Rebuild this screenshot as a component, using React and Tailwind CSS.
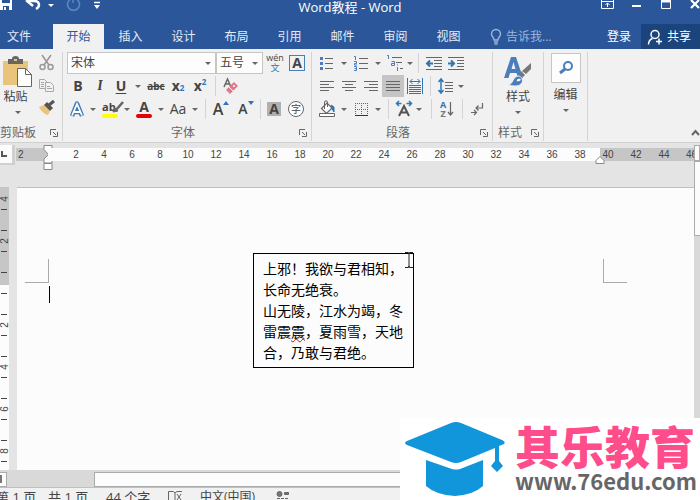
import clsx from "clsx"

const TABS = ["开始", "插入", "设计", "布局", "引用", "邮件", "审阅", "视图"]
const RULER = [2, 4, 6, 8, 10, 12, 14, 16, 18, 20, 22, 24, 26, 28, 30, 32, 34, 36, 38]

function Icon({ children, className = "size-4", box = "0 0 16 16" }) {
  return (
    <svg viewBox={box} className={clsx("shrink-0 overflow-visible", className)} fill="none" stroke="#666" strokeWidth="1">
      {children}
    </svg>
  )
}

function Caret({ className = "w-3" }) {
  return (
    <span className={clsx("flex shrink-0 justify-center", className)}>
      <svg viewBox="0 0 6 3" className="h-[3px] w-1.5">
        <path d="M0 0h6L3 3z" fill="#666" />
      </svg>
    </span>
  )
}

function Tool({ label, className = "w-[22px]", active, children }) {
  return (
    <button
      aria-label={label}
      className={clsx("flex h-[22px] shrink-0 items-center justify-center text-[#444]", className, active && "bg-[#c5c5c5]")}
    >
      {children}
    </button>
  )
}

function Sep() {
  return <span className="ml-1 h-5 w-px shrink-0 bg-[#d4d4d4]" />
}

function Lines({ rows }) {
  return (
    <Icon>
      {rows.map(([x, w], i) => (
        <path key={i} d={`M${x} ${3.5 + i * 3}h${w}`} />
      ))}
    </Icon>
  )
}

function GroupLabel({ children, launcher = true, className }) {
  return (
    <div className={clsx("flex h-[21px] items-center pt-1 text-xs text-[#666]", className)}>
      <span className="flex-1 whitespace-nowrap">{children}</span>
      {launcher && (
        <button aria-label={`${children}设置`}>
          <Icon className="size-2" box="0 0 8 8">
            <path d="M.5 6V.5H6M3 3l3 3M7.5 3v4.5H3" />
          </Icon>
        </button>
      )}
    </div>
  )
}

function Picker({ label, value, className }) {
  return (
    <label className={clsx("relative flex h-[22px] items-center border border-[#c6c6c6] bg-[#fdfdfd]", className)}>
      <select aria-label={label} defaultValue={value} className="h-full w-full appearance-none pl-[3px] text-xs text-[#444]">
        <option>{value}</option>
      </select>
      <span className="pointer-events-none absolute right-1">
        <Caret className="w-1.5" />
      </span>
    </label>
  )
}

function TitleBar() {
  return (
    <div className="flex h-6 items-center pb-2.5">
      <div className="flex flex-1 items-center pb-1">
        <button aria-label="保存">
          <Icon className="h-4 w-3" box="0 0 12 16">
            <path d="M0 0h12v13H0z" fill="#fff" stroke="none" />
            <path d="M2 1h8v5H2zM3 9h6v4H3z" fill="#2b579a" stroke="none" />
            <path d="M4 10h2v3H4z" fill="#fff" stroke="none" />
          </Icon>
        </button>
        <button aria-label="撤消" className="ml-[14px] flex items-center">
          <Icon>
            <path d="M2 4h7c4 0 6 5 1 8" stroke="#fff" strokeWidth="2.4" />
            <path d="M7-1L1 4l6 5" stroke="#fff" strokeWidth="2.4" />
          </Icon>
          <svg viewBox="0 0 6 3" className="ml-1.5 h-[3px] w-1.5">
            <path d="M0 0h6L3 3z" fill="#fff" />
          </svg>
        </button>
        <button aria-label="重复" className="ml-3">
          <Icon>
            <path d="M4 2.5a6 6 0 1 0 7 0M7 6V1h5" stroke="#5b83bd" strokeWidth="1.6" />
          </Icon>
        </button>
        <button aria-label="自定义" className="ml-[11px]">
          <Icon>
            <path d="M1 5.500h6" stroke="#fff" strokeWidth="1.500" />
            <path d="M1 8h6l-3 4z" fill="#fff" stroke="none" />
          </Icon>
        </button>
      </div>
      <h1 className="font-['Open_Sans','Noto_Sans_CJK_SC',sans-serif] text-[13px] leading-4 text-white">Word教程 - Word</h1>
      <div className="flex flex-1 items-center justify-end pb-0.5">
        <button aria-label="功能区显示选项" className="mr-[15px]">
          <Icon>
            <path d="M2.5 1.5h12v9h-12zM2 3.500h13M8.500 9V5M6.500 7l2-2 2 2" stroke="#fff" />
          </Icon>
        </button>
        <button aria-label="最小化" className="mr-3">
          <Icon>
            <path d="M2 8h9" stroke="#fff" strokeWidth="2" />
          </Icon>
        </button>
        <button aria-label="最大化" className="mr-4">
          <Icon>
            <path d="M3.500 2.500h9v8h-9z" stroke="#fff" />
            <path d="M3 3h10" stroke="#fff" strokeWidth="3" />
          </Icon>
        </button>
        <button aria-label="关闭">
          <Icon className="h-4 w-2.5" box="0 0 10 16">
            <path d="M1 2l8 8M9 2l-8 8" stroke="#fff" strokeWidth="2.200" />
          </Icon>
        </button>
      </div>
    </div>
  )
}

function TabBar() {
  return (
    <nav className="flex h-[25px] text-xs text-[#e4ecf7]">
      <button className="w-[53px] shrink-0 pr-[15px]">文件</button>
      {TABS.map((tab, i) => (
        <button key={tab} className={clsx("shrink-0", i === 0 ? "w-[51px] bg-[#f1f1f1] text-[#2b579a]" : "w-[53px]")}>
          {tab}
        </button>
      ))}
      <button className="ml-[15px] flex items-center gap-1 text-[#9db6dc]">
        <Icon className="h-4 w-3" box="0 0 12 16">
          <path d="M4 11C4 8 1.500 8 1.500 5a4.500 4.500 0 0 1 9 0c0 3-2.500 3-2.500 6zM4 13h4M4.500 15h3" stroke="#9db6dc" strokeWidth="1.400" />
        </Icon>
        告诉我...
      </button>
      <button className="mr-2.5 ml-auto text-white">登录</button>
      <button className="flex w-[59px] items-center gap-1 bg-[#1b437c] pl-1.5 text-white">
        <Icon>
          <circle cx="8" cy="5.500" r="4" stroke="#fff" strokeWidth="1.500" />
          <path d="M1.500 15.500c0-3 1.500-5 4-6M9 12.500h6M12 9.500v6" stroke="#fff" strokeWidth="1.500" />
        </Icon>
        共享
      </button>
    </nav>
  )
}

function ClipboardGroup() {
  return (
    <section className="flex w-[63px] shrink-0 flex-col border-r border-[#d4d4d4]">
      <div className="flex h-[68px]">
        <button className="flex w-[35px] flex-col items-center pt-1 text-xs leading-4 text-[#444]">
          <Icon className="h-8 w-[29px]" box="0 0 29 32">
            <path d="M0 5h25v24H0z" fill="#e9c47a" stroke="none" />
            <path d="M5 3h4a3.500 3 0 0 1 7 0h4v5H5z" fill="#666" stroke="none" />
            <path d="M11 3h3v2h-3z" fill="#e9c47a" stroke="none" />
            <path d="M14.500 12.500h8l6 6v12h-14z" fill="#fff" />
            <path d="M22.500 12.500v6h6" />
          </Icon>
          <span className="mr-1 pt-px">粘贴</span>
          <span className="mt-1.5">
            <Caret />
          </span>
        </button>
        <div className="flex flex-col pl-1">
          <Tool label="剪切" className="w-4">
            <Icon>
              <path d="M3 0l7 10M12 0L5 10" stroke="#999" strokeWidth="1.600" />
              <circle cx="3.500" cy="12" r="2.500" stroke="#999" strokeWidth="1.500" />
              <circle cx="11.500" cy="12" r="2.500" stroke="#999" strokeWidth="1.500" />
            </Icon>
          </Tool>
          <Tool label="复制" className="w-4">
            <Icon>
              <path d="M.5 2.500h5l3 3v6h-8z" stroke="#a8a8a8" />
              <path d="M6.500 5.500h5l3 3v6h-8z" fill="#f1f1f1" stroke="#a8a8a8" />
              <path d="M2 5.500h3M2 7.500h3M2 9.500h3M8 9.500h3M8 11.500h5" stroke="#a8a8a8" />
            </Icon>
          </Tool>
          <Tool label="格式刷" className="w-4">
            <Icon>
              <path d="M0 8l5-2 6 6-2 4c-3 0-7-4-9-8z" fill="#e9c47a" stroke="none" />
              <path d="M5 6l3-3 6 6-3 3z" fill="#555" stroke="none" />
              <path d="M10 6l5-4" stroke="#555" strokeWidth="3" />
            </Icon>
          </Tool>
        </div>
      </div>
      <GroupLabel className="pr-1">剪贴板</GroupLabel>
    </section>
  )
}

function FontGroup() {
  return (
    <section className="flex w-[249px] shrink-0 flex-col gap-px border-r border-[#d4d4d4] pl-1">
      <div className="flex items-center">
        <Picker label="字体" value="宋体" className="w-[149px]" />
        <Picker label="字号" value="五号" className="w-[47px]" />
        <Tool label="拼音指南" className="w-6">
          <span className="flex flex-col items-center text-[9px] leading-[10px]">
            <span>wén</span>
            <span className="text-[#2e75b6]">文</span>
          </span>
        </Tool>
        <Tool label="字符边框" className="w-5">
          <span className="flex size-4 items-center justify-center border border-[#4a7ebb] text-sm leading-4 font-bold">A</span>
        </Tool>
      </div>
      <div className="flex items-center text-sm">
        <Tool label="加粗"><b>B</b></Tool>
        <Tool label="倾斜"><i className="font-serif font-bold">I</i></Tool>
        <Tool label="下划线" className="w-5"><b className="underline underline-offset-2">U</b></Tool>
        <Caret className="w-3.5" />
        <Tool label="删除线"><span className="text-[10px] font-bold line-through">abc</span></Tool>
        <Tool label="下标"><b>x</b><sub className="text-[8px] font-bold text-[#2e75b6]">2</sub></Tool>
        <Tool label="上标"><b>x</b><sup className="text-[8px] font-bold text-[#2e75b6]">2</sup></Tool>
        <Sep />
        <Tool label="清除格式" className="w-[30px]">
          <Icon>
            <path d="M1 9l3.500-8L8 9M2 6h5" strokeWidth="1.500" />
            <path d="M3 12l8-8 4 4-8 8z" fill="#e2788a" stroke="none" />
            <path d="M6 9l4 4" stroke="#fff" />
            <circle cx="11" cy="8" r="1" fill="#fff" stroke="none" />
          </Icon>
        </Tool>
      </div>
      <div className="flex items-center text-sm">
        <Tool label="文本效果" className="w-5">
          <Icon>
            <path d="M3 15L8 2.500 13 15M4.500 11h7" stroke="#3f78b5" strokeWidth="4.500" strokeLinejoin="round" />
            <path d="M3 14.500L8 3l5 11.500M5 11h6" stroke="#fff" strokeWidth="1.800" />
          </Icon>
        </Tool>
        <Caret />
        <Tool label="突出显示">
          <span className="flex w-4 flex-col">
            <span className="flex h-3 items-center text-[11px] font-bold">
              ab
              <Icon className="-ml-1 size-3" box="0 0 12 12">
                <path d="M11 1L4 9" strokeWidth="2.500" />
                <path d="M1 11l2-4 3 3z" fill="#666" />
              </Icon>
            </span>
            <span className="mt-px h-1 rounded-sm bg-[#ffff00]" />
          </span>
        </Tool>
        <Caret />
        <Tool label="字体颜色">
          <span className="flex w-4 flex-col items-center">
            <b className="leading-3">A</b>
            <span className="mt-px h-1 w-full rounded-sm bg-[#e60000]" />
          </span>
        </Tool>
        <Caret />
        <Tool label="更改大小写">Aa</Tool>
        <Caret />
        <Sep />
        <Tool label="增大字号" className="w-[30px]">
          <b className="text-base font-semibold">A</b>
          <Icon className="mb-3 h-1 w-1.5" box="0 0 6 4"><path d="M0 4h6L3 0z" fill="#2e75b6" stroke="none" /></Icon>
        </Tool>
        <Tool label="减小字号" className="w-5">
          <b className="font-semibold">A</b>
          <Icon className="mb-3 h-1 w-1.5" box="0 0 6 4"><path d="M0 0h6L3 4z" fill="#2e75b6" stroke="none" /></Icon>
        </Tool>
        <Sep />
        <Tool label="字符底纹" className="w-[26px]"><b className="w-3.5 bg-[#b0b0b0] leading-[14px]">A</b></Tool>
        <Tool label="带圈字符" className="w-[18px]">
          <span className="flex size-4 shrink-0 items-center justify-center rounded-full border border-[#666] bg-white text-[10px]">字</span>
        </Tool>
      </div>
      <GroupLabel className="-mt-px pr-1 text-center">字体</GroupLabel>
    </section>
  )
}

function ParagraphGroup() {
  return (
    <section className="flex w-[181px] shrink-0 flex-col gap-px border-r border-[#d4d4d4] pl-1">
      <div className="flex items-center">
        <Tool label="项目符号">
          <Icon>
            <path d="M6 3.500h8M6 8.500h8M6 13.500h8" />
            <path d="M1 2h3v3H1zM1 7h3v3H1zM1 12h3v3H1z" fill="#4a7ebb" stroke="none" />
          </Icon>
        </Tool>
        <Caret />
        <Tool label="编号">
          <Icon>
            <path d="M6 3.500h9M6 8.500h9M6 13.500h9" />
            <path d="M1 1.500h1.500V5M1 6.500h2.500v2H1.500v1.500h2.500M1 11.500h2.500v4H1M1.500 13.500h2" stroke="#4a7ebb" />
          </Icon>
        </Tool>
        <Caret />
        <Tool label="多级列表">
          <Icon>
            <path d="M5 2.500h10M9 7.500h6M13 13.500h3" />
            <path d="M0 .5h1.500V4M4.500 6.500h3v4h-3v-2h3M10.500 12v4M10.500 9.500v1" stroke="#4a7ebb" />
          </Icon>
        </Tool>
        <Caret className="w-2" />
        <Sep />
        <Tool label="减少缩进" className="ml-1 w-[22px]">
          <Icon>
            <path d="M0 2.500h16M8 5.500h8M8 8.500h8M8 11.500h8M0 14.500h16" />
            <path d="M7 8.500H1M4 5.500l-3 3 3 3" stroke="#2e75b6" strokeWidth="2" />
          </Icon>
        </Tool>
        <Tool label="增加缩进">
          <Icon>
            <path d="M0 2.500h16M9 5.500h7M9 8.500h7M9 11.500h7M0 14.500h16" />
            <path d="M0 8.500h6M3 5.500l3 3-3 3" stroke="#2e75b6" strokeWidth="2" />
          </Icon>
        </Tool>
      </div>
      <div className="flex items-center">
        <Tool label="左对齐"><Lines rows={[[1, 14], [1, 9], [1, 14], [1, 9]]} /></Tool>
        <Tool label="居中"><Lines rows={[[1, 14], [4, 8], [1, 14], [4, 8]]} /></Tool>
        <Tool label="右对齐"><Lines rows={[[1, 14], [6, 9], [1, 14], [6, 9]]} /></Tool>
        <Tool label="两端对齐" active><Lines rows={[[1, 14], [1, 14], [1, 14], [1, 14]]} /></Tool>
        <Tool label="分散对齐">
          <Icon>
            <path d="M2 7.500h12M2 9.500h12M2 11.500h12M2 13.500h12M2 15.500h12" />
            <path d="M.5 0v16M15.500 0v16M3 3.500h10M5.500 1L3 3.500 5.500 6M10.500 1L13 3.500 10.500 6" stroke="#2e75b6" />
          </Icon>
        </Tool>
        <Sep />
        <Tool label="行距" className="ml-1 w-[22px]">
          <Icon>
            <path d="M7 4.500h8M7 7.500h8M7 10.500h8M7 13.500h8" />
            <path d="M3 1v14M.5 4L3 1l2.500 3M.5 12L3 15l2.500-3" stroke="#2e75b6" strokeWidth="1.500" />
          </Icon>
        </Tool>
        <Caret className="w-2" />
      </div>
      <div className="flex items-center">
        <Tool label="底纹">
          <Icon>
            <path d="M2.500 7.500L8 2l5 5-5.500 5.500z" fill="#fff" strokeWidth="1.200" />
            <path d="M5.500 8V1c0-1.500 3-1.500 3 0v5" />
            <path d="M12 4l3 2v5l-2-3z" fill="#2e75b6" stroke="#2e75b6" />
            <path d="M.5 12.500h15v3H.5z" fill="#fff" />
          </Icon>
        </Tool>
        <Caret />
        <Tool label="边框">
          <Icon>
            <path d="M2 2.500h13M2 8.500h13M2.500 2v12M8.500 2v12M14.500 2v12" strokeDasharray="1 1" />
            <path d="M2 14.500h13" stroke="#333" />
          </Icon>
        </Tool>
        <Caret />
        <Sep />
        <Tool label="中文版式" className="ml-1 w-[22px]">
          <Icon>
            <path d="M3 15L8 5l5 10M5 11.500h6" stroke="#555" strokeWidth="2" />
            <path d="M5.500 2.500H.5M3 0L.5 2.500 3 5M10.500 2.500h5M13 0l2.500 2.500L13 5" stroke="#2e75b6" strokeWidth="1.500" />
          </Icon>
        </Tool>
        <Caret className="w-2" />
        <span className="ml-2 h-5 w-px shrink-0 bg-[#d4d4d4]" />
        <Tool label="排序" className="ml-1 w-[22px]">
          <span className="flex flex-col text-[9px] leading-[9px] font-bold">
            <span className="text-[#2e75b6]">A</span>
            <span className="text-[#777]">Z</span>
          </span>
          <Icon className="h-4 w-2" box="0 0 8 16">
            <path d="M4.500 1v13M2 11l2.500 3L7 11" strokeWidth="1.200" />
          </Icon>
        </Tool>
        <Sep />
        <Tool label="显示编辑标记" className="w-7">
          <Icon>
            <path d="M13.500 2v5H7M9.500 4.500L7 7l2.500 2.500M2 11.500h5M5 9l2.500 2.500L5 14" strokeWidth="1.200" />
          </Icon>
        </Tool>
      </div>
      <GroupLabel className="-mt-px pr-1 text-center">段落</GroupLabel>
    </section>
  )
}

function Ribbon() {
  return (
    <div className="flex border-b border-[#d0d0d0] bg-[#f1f1f1] pt-[3px] pb-px">
      <ClipboardGroup />
      <FontGroup />
      <ParagraphGroup />
      <section className="flex w-[51px] shrink-0 flex-col border-r border-[#d4d4d4]">
        <button className="flex h-[68px] flex-col items-center pt-1 text-xs leading-4 text-[#444]">
          <Icon className="h-8 w-7" box="0 0 28 32">
            <path d="M0 22L7 1h5l7 21h-5l-1.500-5H6L4.500 22zM7.500 13h4L9.500 6z" fill="#4a7ebb" fillRule="evenodd" stroke="none" />
            <path d="M27 7v6l-5 5-4-3z" fill="#777" stroke="none" />
            <path d="M16 16l4 4" stroke="#777" strokeWidth="3" />
            <path d="M4 29c5 0 5-9 10-9 4 0 6 5 3 8-3 3-9 2-13 1z" fill="#4a7ebb" stroke="#f1f1f1" />
            <path d="M13 24c2 1 3-1 3-1" stroke="#fff" strokeWidth="2" />
          </Icon>
          <span className="pt-px">样式</span>
          <span className="mt-1.5"><Caret /></span>
        </button>
        <GroupLabel className="pr-1 pl-[5px]">样式</GroupLabel>
      </section>
      <section className="flex w-11 shrink-0 flex-col border-r border-[#d4d4d4]">
        <button className="flex flex-col items-center text-xs leading-4 text-[#444]">
          <span className="mt-px mb-1 flex size-[30px] items-center justify-center border border-[#c6c6c6] bg-[#fdfdfd]">
            <Icon>
              <circle cx="10" cy="6" r="4" stroke="#4a7ebb" strokeWidth="2" />
              <path d="M7 9l-5 4" stroke="#4a7ebb" strokeWidth="3" />
            </Icon>
          </span>
          编辑
          <span className="mt-1.5"><Caret /></span>
        </button>
      </section>
      <button aria-label="折叠功能区" className="ml-auto self-end pb-1">
        <Icon className="h-2 w-[9px]" box="0 0 9 8">
          <path d="M1 6l3.500-4L8 6" strokeWidth="2" />
        </Icon>
      </button>
    </div>
  )
}

function Ruler() {
  return (
    <div className="flex items-start">
      <div className="mt-0.5 mr-px flex h-5 w-[15px] shrink-0 items-center border-r-3 border-b-2 border-[#d0d0d0] bg-[#fcfcfc]">
        <Icon className="ml-px size-2" box="0 0 8 8">
          <path d="M1 1v5h5" stroke="#555" strokeWidth="2" />
        </Icon>
      </div>
      <div className="mt-[5px] flex h-[13px] flex-1 overflow-visible text-[10px] leading-[13px] text-[#444]">
        <div className="flex w-8 shrink-0 justify-between bg-[#c6c6c6] pl-0.5">
          2
          <Icon className="-mt-[3px] -mr-[5px] h-[26px] w-2.5" box="0 0 10 26">
            <path d="M1 .5h8v4L5 9 1 4.500zM5 10l4 4v4H1v-4zM1 18.500h8v6H1z" fill="#fff" stroke="#888" />
          </Icon>
        </div>
        <div className="flex flex-1 bg-[#fcfcfc] pl-3.5">
          {RULER.map((n) => (
            <span key={n} className="w-7 shrink-0 text-center">{n}</span>
          ))}
        </div>
        <div className="flex w-[94px] shrink-0 bg-[#c6c6c6]">
          <Icon className="mt-2 -mr-1 -ml-1 h-2 w-2" box="0 0 8 8">
            <path d="M4 .5l4 4v3H0v-3z" fill="#fff" stroke="#888" />
          </Icon>
          <span className="mr-1.5 w-4 shrink-0 text-center">40</span>
          <span className="w-7 shrink-0 text-center">42</span>
          <span className="w-7 shrink-0 text-center">44</span>
          <span className="min-w-0 flex-1 overflow-hidden pl-2">46</span>
        </div>
      </div>
    </div>
  )
}

function RulerMark({ children }) {
  return (
    <div className="w-[9px] shrink-0">
      <div className="flex h-5 items-center justify-center">
        <span className="-rotate-90">{children}</span>
      </div>
      <div className="ml-px h-px w-1.5 bg-[#444]" />
      <div className="h-5" />
      <div className="ml-px h-px w-1.5 bg-[#444]" />
    </div>
  )
}

function VerticalRuler() {
  return (
    <div className="flex w-[9px] shrink-0 flex-col overflow-hidden text-[10px] leading-3 text-[#444]">
      <div className="h-[98px] shrink-0 bg-[#c6c6c6] pt-0.5">
        <RulerMark>4</RulerMark>
        <RulerMark>2</RulerMark>
      </div>
      <div className="flex-1 bg-[#fcfcfc] pt-2">
        <div className="ml-px h-px w-1.5 bg-[#444]" />
        <div className="h-5" />
        <div className="ml-px h-px w-1.5 bg-[#444]" />
        <RulerMark>2</RulerMark>
        <RulerMark>4</RulerMark>
        <RulerMark>6</RulerMark>
        <RulerMark>8</RulerMark>
      </div>
    </div>
  )
}

function Page() {
  return (
    <main className="ml-2 flex flex-1 items-start border-t border-[#bfbfbf] bg-[#fcfcfc] pt-[65px] pr-[67px] pl-2">
      <div>
        <div className="mt-1.5 size-6 border-r border-b border-[#aaa]" />
        <div className="mt-[3px] ml-6 h-[17px] w-px bg-black" />
      </div>
      <div className="relative ml-[203px] w-[161px] shrink-0 border border-black px-[9px] py-1 font-['Noto_Sans_CJK_SC',sans-serif] text-sm leading-[21px] whitespace-nowrap text-black">
        <p>上邪！我欲与君相知，<br />长命无绝衰。</p>
        <p>
          山无陵，江水为竭，冬<br />
          雷震<span className="underline decoration-red-600 decoration-wavy decoration-1 underline-offset-1">震</span>，夏雨雪，天地<br />
          合，乃敢与君绝。
        </p>
        <svg viewBox="0 0 8 16" className="absolute -top-0.5 right-0 h-4 w-2" fill="none" stroke="#222">
          <path d="M0 .5h3.500L4 2l.5-1.500H8M4 1v14M0 15.500h3.500L4 14l.5 1.500H8" />
        </svg>
      </div>
      <div className="mt-1.5 ml-auto size-6 border-b border-l border-[#aaa]" />
    </main>
  )
}

function StatusBar() {
  return (
    <footer className="flex h-[13px] shrink-0 items-start overflow-hidden border-t border-[#c0c0c0] bg-[#f1f1f1] pt-px text-[13px] leading-4 whitespace-nowrap text-[#444]">
      <span className="-ml-1 w-[52px]">第 1 页</span>
      <span className="w-[58px]">共 1 页</span>
      <span className="w-[62px]">44 个字</span>
      <Icon className="h-4 w-8" box="0 0 32 16">
        <path d="M.5 12V2.500h5L7 4v10M7 4l2-1.500h5M9 5l4 6M13 5l-4 6" />
      </Icon>
      <span className="w-[76px] text-xs leading-4">中文(中国)</span>
      <Icon>
        <circle cx="3.500" cy="5" r="2.500" fill="#777" />
        <path d="M8.500 3.500h4v2h-4z" fill="#777" />
        <path d="M1 9.500h12M1 12.500h12" strokeDasharray="3 1" />
      </Icon>
    </footer>
  )
}

function Watermark() {
  return (
    <div className="absolute right-0 bottom-0 flex h-[82px] w-[300px] items-start bg-white">
      <svg viewBox="0 8 110 82" className="h-[82px] w-[110px] shrink-0" fill="#1296db">
        <path d="M7 31L51 13q5-2 10 0l41 17q4 2 2 4l-5 2v15l4 5-6 6-6-6 4-5V38L61 52q-5 2-10 0L7 35q-4-2 0-4z" />
        <path d="M26 50l26 9q4 1 8 0l23-9v26q-10 9-28 10-19-1-29-10z" />
      </svg>
      <div className="flex flex-col pl-[5px] font-['Noto_Sans_CJK_SC',sans-serif] font-bold whitespace-nowrap">
        <span className="pt-1.5 text-[45px] leading-[44px] font-black text-[#ff4c8b]">其乐教育</span>
        <a href="#edu" className="text-[22px] leading-6 text-[#666]">www.76edu.com</a>
      </div>
    </div>
  )
}

export default function App() {
  return (
    <div className="relative flex h-screen flex-col overflow-hidden bg-[#e4e4e4] font-['Open_Sans','Noto_Sans_CJK_SC',sans-serif]">
      <header className="shrink-0 bg-[#2b579a]">
        <TitleBar />
        <TabBar />
      </header>
      <Ribbon />
      <div className="flex min-h-0 flex-1 font-['Liberation_Sans',sans-serif]">
        <div className="flex min-w-0 flex-1 flex-col">
          <div className="h-11 shrink-0">
            <Ruler />
          </div>
          <div className="flex min-h-0 flex-1">
            <VerticalRuler />
            <Page />
          </div>
        </div>
        <div className="mt-0.5 flex w-1.5 shrink-0 flex-col bg-[#d9d9d9]">
          <div className="h-4 border border-[#ababab] bg-[#fcfcfc]" />
          <div className="h-[75px] border border-r-0 border-[#ababab] bg-[#fcfcfc]" />
        </div>
      </div>
      <div className="flex h-[17px] shrink-0 items-center border-t border-[#d9d9d9] bg-[#d9d9d9]">
        <button aria-label="向左滚动" className="flex h-[15px] w-[7px] items-center border border-l-0 border-[#ababab] bg-[#fcfcfc]">
          <span className="h-2 w-0.5 bg-[#777]" />
        </button>
        <div className="ml-[87px] h-[15px] flex-1 border border-[#ababab] bg-[#fcfcfc]" />
      </div>
      <StatusBar />
      <Watermark />
    </div>
  )
}
